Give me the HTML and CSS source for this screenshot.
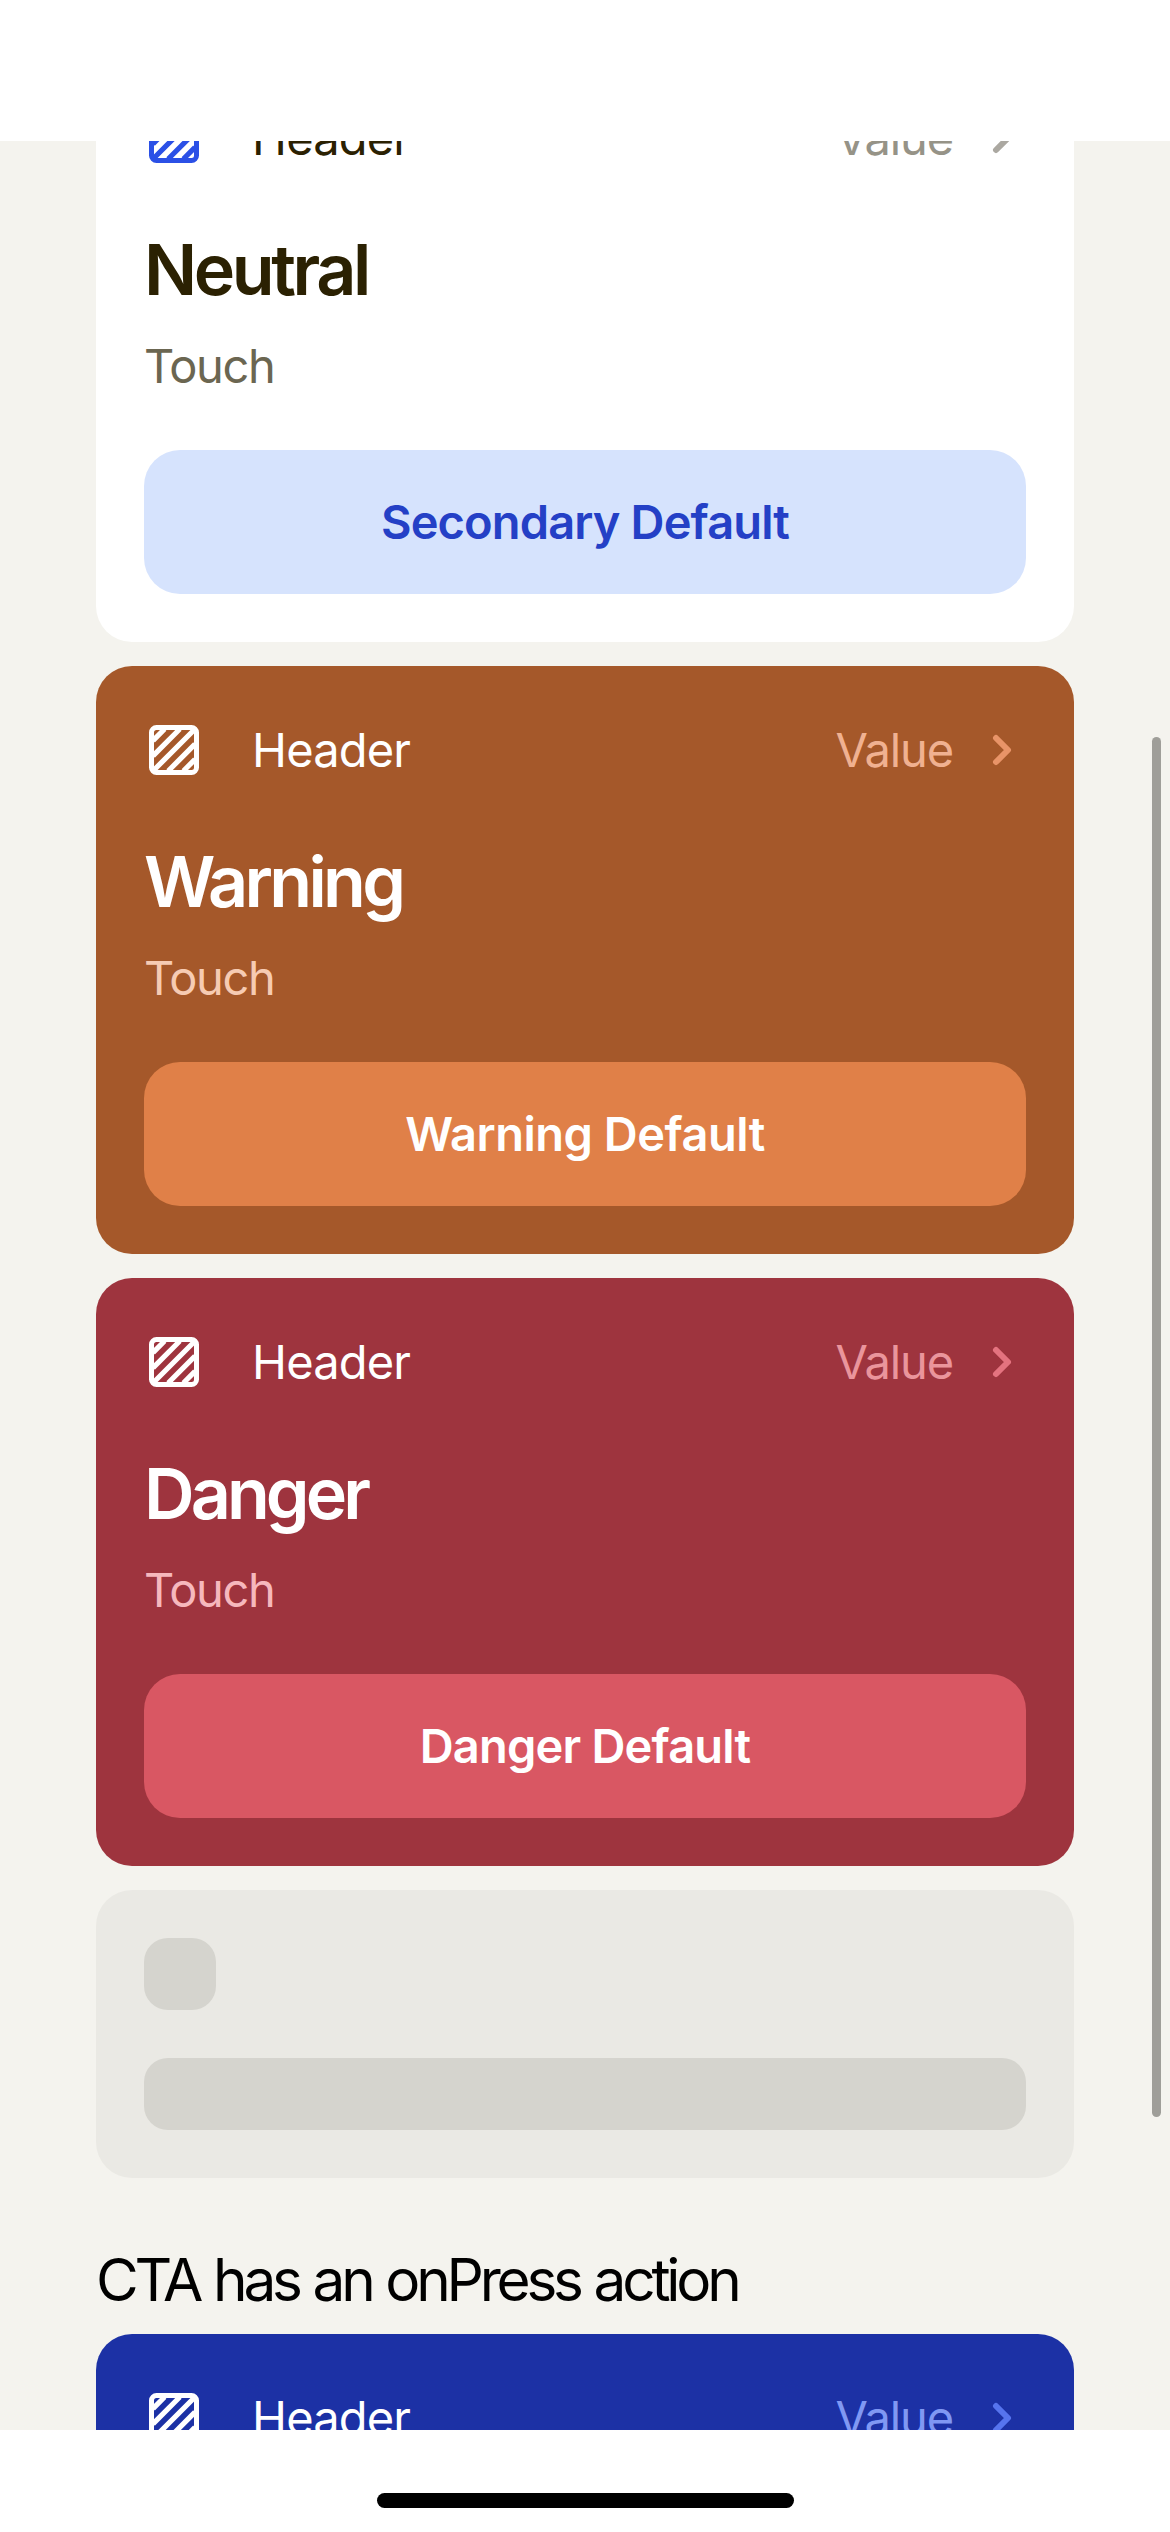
FILE: index.html
```html
<!DOCTYPE html>
<html lang="en">
<head>
<meta charset="utf-8">
<title>Cards</title>
<link rel="stylesheet" href="styles.css">
</head>
<body>
<svg class="defs" aria-hidden="true">
  <symbol id="icon-placeholder" viewBox="0 0 60 60">
    <rect x="7.5" y="7.5" width="45" height="45" rx="5" fill="none" stroke="currentColor" stroke-width="5"/>
    <path d="M9 20.6 20.6 9M9 35.8 35.8 9M9 51 51 9M24.2 51 51 24.2M39.4 51 51 39.4" fill="none" stroke="currentColor" stroke-width="5.2"/>
  </symbol>
  <symbol id="icon-chevron" viewBox="0 0 48 48">
    <path d="M18 12 30 24 18 36" fill="none" stroke="currentColor" stroke-width="6" stroke-linecap="round" stroke-linejoin="round"/>
  </symbol>
</svg>
<div class="screen">
  <main class="scroller">
    <div class="list">
      <section class="card neutral">
        <header class="card-header">
          <svg class="icon"><use href="#icon-placeholder"/></svg>
          <span class="label">Header</span>
          <span class="value">Value</span>
          <svg class="chevron"><use href="#icon-chevron"/></svg>
        </header>
        <h2 class="title">Neutral</h2>
        <p class="subtitle">Touch</p>
        <button class="button">Secondary Default</button>
      </section>
      <section class="card warning">
        <header class="card-header">
          <svg class="icon"><use href="#icon-placeholder"/></svg>
          <span class="label">Header</span>
          <span class="value">Value</span>
          <svg class="chevron"><use href="#icon-chevron"/></svg>
        </header>
        <h2 class="title">Warning</h2>
        <p class="subtitle">Touch</p>
        <button class="button">Warning Default</button>
      </section>
      <section class="card danger">
        <header class="card-header">
          <svg class="icon"><use href="#icon-placeholder"/></svg>
          <span class="label">Header</span>
          <span class="value">Value</span>
          <svg class="chevron"><use href="#icon-chevron"/></svg>
        </header>
        <h2 class="title">Danger</h2>
        <p class="subtitle">Touch</p>
        <button class="button">Danger Default</button>
      </section>
      <section class="card skeleton">
        <div class="block block-icon"></div>
        <div class="block"></div>
      </section>
    </div>
    <h3 class="section-title">CTA has an onPress action</h3>
    <section class="card primary">
      <header class="card-header">
        <svg class="icon"><use href="#icon-placeholder"/></svg>
        <span class="label">Header</span>
        <span class="value">Value</span>
        <svg class="chevron"><use href="#icon-chevron"/></svg>
      </header>
    </section>
    <div class="scrollbar"></div>
  </main>
  <footer class="bottom-bar"><div class="home-indicator"></div></footer>
</div>
</body>
</html>
```
FILE: styles.css
```css
* { box-sizing: border-box; }
body {
  margin: 0;
  background: #fff;
  font-family: Inter, "Liberation Sans", sans-serif;
}
h2, h3, p { margin: 0; }
.defs { position: absolute; width: 0; height: 0; }

.screen {
  display: flex;
  flex-direction: column;
  width: 1170px;
  height: 2532px;
  padding-top: 141px;
  overflow: hidden;
}
.scroller {
  position: relative;
  flex: 1;
  min-height: 0;
  padding: 0 96px;
  overflow: hidden;
  background: #f4f3ee;
}
/* The list is scrolled part of the way down. */
.list {
  display: flex;
  flex-direction: column;
  gap: 24px;
  margin-top: -87px;
}

.card { padding: 48px; border-radius: 36px; background: var(--surface); }
.card-header { display: flex; align-items: center; height: 72px; }
.icon { width: 60px; height: 60px; margin-right: 48px; color: var(--icon); }
.label, .value, .subtitle { font-size: 47px; font-weight: 400; line-height: 72px; }
.label { letter-spacing: -0.8px; color: var(--text); }
.value { margin-left: auto; letter-spacing: -1.1px; color: var(--value); }
.chevron { width: 48px; height: 48px; margin-left: 25px; color: var(--chevron); }
.title {
  margin-top: 54px;
  font-size: 70px;
  font-weight: 600;
  line-height: 84px;
  letter-spacing: var(--title-tracking);
  color: var(--text);
}
.subtitle { margin-top: 18px; letter-spacing: -1.37px; color: var(--muted); }
.button {
  display: block;
  width: 100%;
  height: 144px;
  margin-top: 48px;
  padding: 0;
  border: 0;
  border-radius: 36px;
  background: var(--button);
  color: var(--button-text);
  font: 600 47px/72px Inter, "Liberation Sans", sans-serif;
  letter-spacing: var(--button-tracking);
}

.neutral {
  --surface: #fff; --icon: #2b50e6; --text: #2b2102; --value: #969387;
  --chevron: #aba8a1; --muted: #6b6651; --button: #d6e3fd; --button-text: #2440c6;
  --title-tracking: -3.4px; --button-tracking: -0.87px;
}
.warning {
  --surface: #a5582a; --icon: #fff; --text: #fff; --value: #f0b191;
  --chevron: #e89468; --muted: #f6cbb3; --button: #e08048; --button-text: #fff;
  --title-tracking: -3.65px; --button-tracking: -0.5px;
}
.danger {
  --surface: #9e343e; --icon: #fff; --text: #fff; --value: #ea959c;
  --chevron: #e4737f; --muted: #f6b8bd; --button: #d95763; --button-text: #fff;
  --title-tracking: -3.9px; --button-tracking: -0.8px;
}
.primary {
  --surface: #1c31a5; --icon: #fff; --text: #fff; --value: #8098f3; --chevron: #5674ee;
  height: 588px;
}
.skeleton { --surface: #eae9e4; display: flex; flex-direction: column; gap: 48px; }
.block { height: 72px; border-radius: 24px; background: #d5d4ce; }
.block-icon { width: 72px; }

.section-title {
  margin: 66px 0 18px;
  font-size: 58.5px;
  font-weight: 400;
  line-height: 72px;
  letter-spacing: -4.2px;
  word-spacing: 1.5px;
  white-space: nowrap;
  color: #000;
}
.scrollbar {
  position: absolute;
  top: 596px;
  right: 9px;
  width: 9px;
  height: 1380px;
  border-radius: 5px;
  background: #9f9e99;
}
.bottom-bar {
  display: flex;
  flex: 0 0 102px;
  align-items: flex-end;
  justify-content: center;
  padding-bottom: 24px;
  background: #fff;
}
.home-indicator { width: 417px; height: 15px; border-radius: 8px; background: #000; }
```
